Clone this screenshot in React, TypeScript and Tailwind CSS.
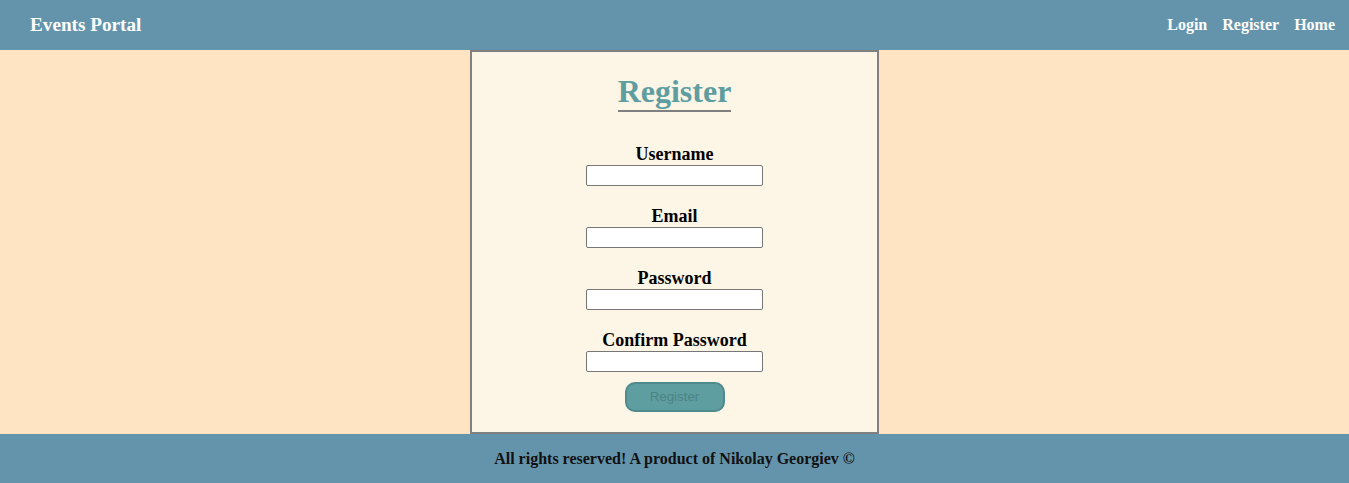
import React from 'react'

const serif = { fontFamily: '"Liberation Serif", "Times New Roman", serif' }

const fields = ['Username', 'Email', 'Password', 'Confirm Password']

const Header: React.FC = () => (
  <header className="h-[50px] bg-[#6494ac] flex items-center justify-between pl-[30px] pr-[14px] text-white font-bold">
    <a className="text-[19.2px]">Events Portal</a>
    <nav className="flex items-center gap-[15px] text-[16px]">
      <a>Login</a>
      <a>Register</a>
      <a>Home</a>
    </nav>
  </header>
)

const RegisterForm: React.FC = () => (
  <div className="w-[409px] border-2 border-[#808080] bg-[#fdf5e6] flex flex-col items-center pt-[23px] pb-[20px]">
    <h1 className="text-[32px] leading-[32px] font-bold text-[#5f9ea0] pb-[3px] border-b-2 border-[#808080]">
      Register
    </h1>
    <form className="mt-[32px] flex flex-col items-center gap-[20px]">
      {fields.map((f) => (
        <div key={f} className="flex flex-col items-center">
          <label className="text-[18px] leading-[21px] font-bold text-black">{f}</label>
          <input
            type={f.includes('Password') ? 'password' : 'text'}
            className="w-[177px] h-[21px] bg-white border border-[#767676] rounded-[2px] outline-none"
          />
        </div>
      ))}
    </form>
    <button
      className="mt-[10px] w-[100px] h-[30px] rounded-[10px] bg-[#5f9ea0] border-2 border-[#4f8a8c] text-[13.33px] text-[#4a8486]"
      style={{ fontFamily: '"Liberation Sans", Arial, sans-serif' }}
    >
      Register
    </button>
  </div>
)

export default function App() {
  return (
    <div className="min-h-[483px] flex flex-col bg-[#ffe4c4]" style={serif}>
      <Header />
      <main className="flex-1 flex justify-center">
        <RegisterForm />
      </main>
      <footer className="h-[49px] bg-[#6494ac] flex items-center justify-center text-[16px] font-bold text-[#111]">
        All rights reserved! A product of Nikolay Georgiev ©
      </footer>
    </div>
  )
}
